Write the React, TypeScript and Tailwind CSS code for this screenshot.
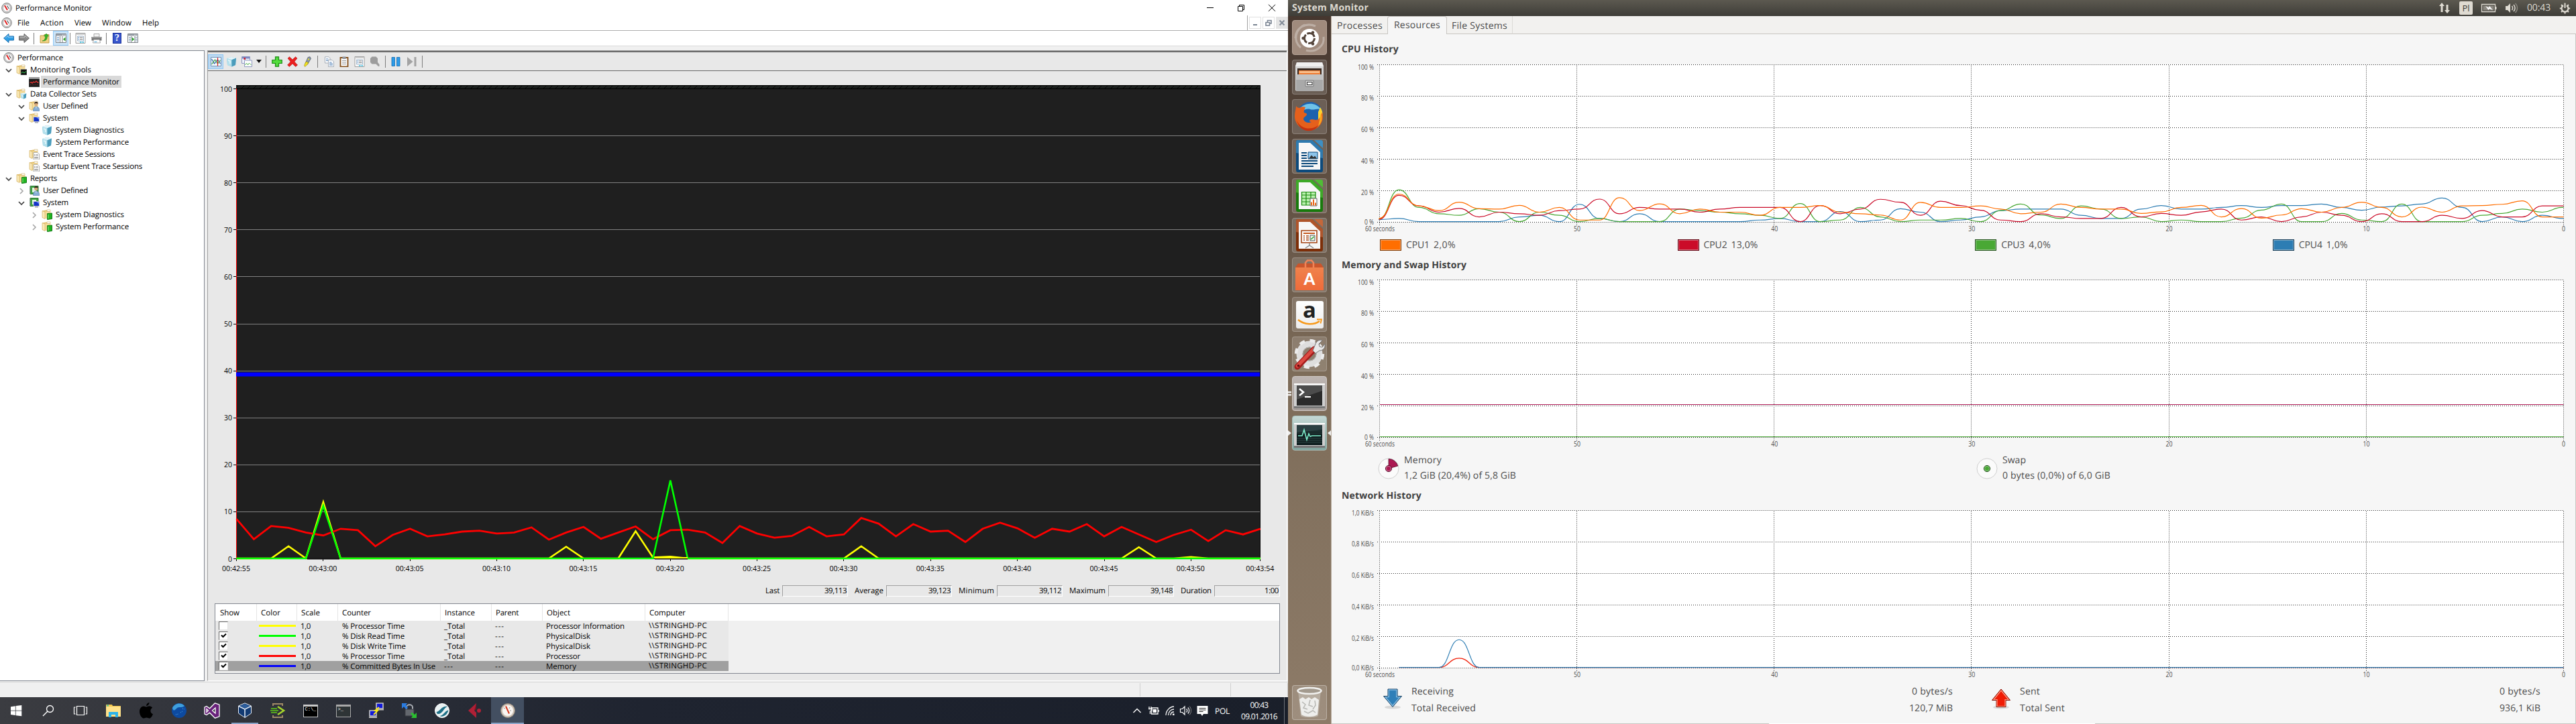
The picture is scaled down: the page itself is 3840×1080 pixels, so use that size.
import React, { useLayoutEffect, useRef, useState } from "react";

/* Label whose letter spacing is adjusted so that it spans w pixels. */
function T({ w, children, className = "" }: { w: number; children: string; className?: string }) {
  const ref = useRef<HTMLSpanElement>(null);
  const [ls, setLs] = useState(0);
  useLayoutEffect(() => {
    if (ref.current) {
      const natural = ref.current.getBoundingClientRect().width;
      setLs((w - natural) / children.length);
    }
  }, []);
  return (
    <span
      ref={ref}
      className={"inline-block w-fit shrink-0 whitespace-pre [text-rendering:geometricPrecision] " + className}
      style={{ letterSpacing: ls + "px" }}
    >
      {children}
    </span>
  );
}

type IconProps = { s?: number; children: React.ReactNode; vb?: number; className?: string };
function Ico({ s = 16, vb = 16, children, className = "" }: IconProps) {
  return (
    <svg width={s} height={s} viewBox={`0 0 ${vb} ${vb}`} className={"block shrink-0 " + className} fill="none">
      {children}
    </svg>
  );
}

/* ---------- small Windows icons ---------- */
const Gauge = () => (
  <Ico>
    <ellipse cx="8" cy="8" rx="7.3" ry="7.5" fill="#d8d8d8" stroke="#7c7c7c" />
    <ellipse cx="8" cy="8" rx="5.4" ry="5.6" fill="#fff" stroke="#9a9a9a" strokeWidth=".7" />
    <path d="M5 4.2 9 11" stroke="#e01818" strokeWidth="1.9" />
    <path d="M8.500 4.500 11.300 9" stroke="#404850" strokeWidth="1.100" />
  </Ico>
);
const FolderShape = () => (
  <>
    <path d="M1 2.5 6 1.5h5l1 1h1v11L5 14l-4-1.5z" fill="#e3bf6b" />
    <path d="M4 3.5h9.5V14H4z" fill="#f6dd9a" />
    <path d="M1 2.5 5 4v10.5L1 12.5z" fill="#fbeab8" stroke="#caa551" strokeWidth=".6" />
    <path d="M8 1h5v2.5H8z" fill="#fff" stroke="#c9a85c" strokeWidth=".6" />
  </>
);
const FolderMon = () => (
  <Ico>
    <FolderShape />
    <path d="M7 7.5h9V16H7z" fill="#111" stroke="#777" strokeWidth=".8" />
    <path d="M8 13l2-2 2 2 2-2h1.5" stroke="#2ecf50" strokeWidth="1" />
  </Ico>
);
const CubeShape = () => (
  <>
    <path d="M1 3 8 1l7 1.5L14 13l-5.500 2.500L2 13z" fill="#8cc9dd" />
    <path d="M1 3l7.500 2L8.500 15.500 2 13z" fill="#b4e0ec" />
    <path d="M8.500 5 15 2.500 14 13l-5.500 2.500z" fill="#4b9cbb" />
    <path d="M1 3 8 1l7 1.500L8.500 5z" fill="#e4f5fa" />
    <path d="M3 6l3 1v4" stroke="#e8f7fb" strokeWidth="1.500" />
  </>
);
const Cube = () => (
  <Ico>
    <CubeShape />
  </Ico>
);
const FolderCube = () => (
  <Ico>
    <FolderShape />
    <g transform="translate(6 6) scale(.62)">
      <CubeShape />
    </g>
  </Ico>
);
const Person = () => (
  <>
    <circle cx="10.800" cy="5.500" r="2.600" fill="#d9a97c" />
    <path d="M8 4.800c0-4 6-4 5.800 0-1.800-1-4-1-5.800 0z" fill="#3c2c20" />
    <path d="M6.500 15.500c0-5 2-6.500 4.500-6.500s4.800 1.500 4.800 6.500z" fill="#86aed6" stroke="#4c76a5" strokeWidth=".6" />
    <path d="M10.200 9.500h1.400l-.7 3z" fill="#fff" />
  </>
);
const FolderUser = () => (
  <Ico>
    <FolderShape />
    <Person />
  </Ico>
);
const Screen = () => (
  <>
    <path d="M7 6.500h8.500v7H7z" fill="#1432c8" stroke="#c8ccd4" strokeWidth=".9" />
    <path d="M11 7h4v3z" fill="#6f90ff" />
    <path d="M9 14.800h5" stroke="#a8acb4" strokeWidth="1.600" />
  </>
);
const FolderSys = () => (
  <Ico>
    <FolderShape />
    <Screen />
  </Ico>
);
const FolderTrace = () => (
  <Ico>
    <FolderShape />
    <path d="M7 5.500h6l2.500 2.500v8H7z" fill="#fff" stroke="#999" strokeWidth=".8" />
    <path d="M9 8v2.500M9 12v2.500M13 12v2.500" stroke="#777" />
    <circle cx="12.300" cy="9.300" r="1" stroke="#777" strokeWidth=".8" />
    <circle cx="11" cy="13.200" r="1" stroke="#777" strokeWidth=".8" />
  </Ico>
);
const FolderReport = () => (
  <Ico>
    <FolderShape />
    <path d="M8.500 6.500 15.500 6v8.500l-7 1z" fill="#1fb41f" stroke="#0c6f10" strokeWidth=".9" />
    <path d="M10 8v6" stroke="#8be88b" strokeWidth="1" />
  </Ico>
);
const Book = () => (
  <>
    <path d="M2 1.500h12v12H2z" fill="#3fa443" stroke="#1c6a24" strokeWidth=".9" />
    <path d="M5 4h6v7H5z" fill="#e4f6e4" />
    <path d="M1 2.500h2M1 5h2M1 7.500h2M1 10h2M1 12.500h2" stroke="#888" />
  </>
);
const BookUser = () => (
  <Ico>
    <Book />
    <Person />
  </Ico>
);
const BookSys = () => (
  <Ico>
    <Book />
    <Screen />
  </Ico>
);
const MonDark = () => (
  <Ico>
    <path d="M0 1.500h16v14H0z" fill="#1c1c1c" stroke="#555" />
    <path d="M0 1.500h16v2H0z" fill="#c4c4c4" />
    <path d="M1.500 9.500l2-1 1.500 1.500 2-2 2 1 2-2 2 2h1.500" stroke="#e33030" strokeWidth="1.300" />
    <path d="M2 12.500h11" stroke="#8c2b2b" strokeDasharray="1 1.500" />
  </Ico>
);
const Arrow = ({ c, d, flip }: { c: string; d: string; flip?: boolean }) => (
  <Ico className={flip ? "-scale-x-100" : ""}>
    <path d="M.6 8 8 1.500V5h7.400v6H8v3.500z" fill={c} stroke={d} strokeWidth="1" />
    <path d="M3 7.500 7 4v2.300h7.500" stroke="#fff" strokeOpacity=".5" />
  </Ico>
);
const FolderUp = () => (
  <Ico>
    <path d="M1 4h5l1-1.500h7V15H1z" fill="#f0d183" stroke="#b98f35" strokeWidth=".8" />
    <path d="M4 12c4-1 4.500-4 4.500-7H6.500L10 1l3.500 4h-2c0 5-2 7.500-7.500 7z" fill="#35b526" stroke="#1d7d14" strokeWidth=".5" />
  </Ico>
);
const Pane = ({ right }: { right?: boolean }) => (
  <Ico>
    <path d="M.5 1.500h15v13H.5z" fill="#fff" stroke="#7b8087" />
    <path d="M.5 2h15v2.500H.5z" fill="#9aa0a8" />
    <path d="M10 3.200h1M12 3.200h1M14 3.200h1" stroke="#fff" />
    {right ? (
      <>
        <path d="M6 5v9.500M11 5v9.500" stroke="#7b8087" />
        <path d="M6.800 6.500v6l3.500-3z" fill="#2aa12a" />
        <path d="M2 7h3M2 9.500h3M2 12h3M12 7h2.500M12 9.500h2.500M12 12h2.500" stroke="#6f8fae" />
      </>
    ) : (
      <>
        <path d="M6.500 5v9.500M10 5v9.500" stroke="#7b8087" />
        <path d="M14.500 6.500v6l-3.500-3z" fill="#2aa12a" />
        <path d="M2 7h3M2 9.500h3M2 12h3" stroke="#4d86bd" strokeWidth="1.200" />
      </>
    )}
  </Ico>
);
const Props = () => (
  <Ico>
    <path d="M1 .6h14v14.800H1z" fill="#fff" stroke="#9a9a9a" />
    <path d="M1.500 2h13" stroke="#c9c9c9" strokeWidth="1.800" />
    <path d="M3.500 5h9v7h-9z" stroke="#9db2c6" />
    <path d="M5 7h1M5 9.500h1" stroke="#2a70b8" strokeWidth="1.400" />
    <path d="M7 7h4.500M7 9.500h4.500" stroke="#777" />
    <path d="M7 14h2.500M10.500 14H13" stroke="#36c4e8" strokeWidth="1.300" />
  </Ico>
);
const Printer = () => (
  <Ico>
    <path d="M4 1.500h8V6H4z" fill="#f4f4f4" stroke="#888" strokeWidth=".7" />
    <path d="M.5 6h15v5.500H.5z" fill="#777" />
    <path d="M.5 6h15v2H.5z" fill="#999" />
    <path d="M3.500 10h9l1 5h-11z" fill="#fff" stroke="#888" strokeWidth=".7" />
    <path d="M4.500 13.500h4" stroke="#45a8e0" />
  </Ico>
);
const Help = () => (
  <div className="flex h-4 w-[13px] items-center justify-center border border-[#16309a] bg-[#3a57cd] font-['Liberation_Serif',serif] text-[14px] leading-none font-bold text-white">
    ?
  </div>
);
const LineChart = () => (
  <Ico>
    <path d="M.5 1.500h15v13H.5z" fill="#f6fbff" stroke="#6f93b8" />
    <path d="M1 6h14M1 10h14" stroke="#b9c8d6" strokeWidth=".6" />
    <path d="M1.500 4l4 7 5-6 4 6" stroke="#3a68b2" strokeWidth="1.200" />
    <path d="M1.500 12l5-7 4 6 4-5" stroke="#46a846" strokeWidth="1.200" />
    <path d="M10.500 2v12.500" stroke="#e02020" strokeWidth="1.200" />
  </Ico>
);
const Gallery = () => (
  <Ico>
    <path d="M.5.5h12v10H.5z" fill="#eef2fb" stroke="#8f98c0" />
    <path d="M1 1h11v2.500H1z" fill="#7a86c6" />
    <path d="M3.500 2h2.500v3H3.500z" fill="#c8232d" />
    <path d="M4.500 6h11v9.500h-11z" fill="#fff" stroke="#8f98c0" />
    <path d="M5.500 13l2-3 2 3 2-3 3 3" stroke="#59b559" />
  </Ico>
);
const Plus = () => (
  <Ico>
    <path d="M5.500.8h5v4.700h4.700v5h-4.700v4.700h-5v-4.700H.8v-5h4.700z" fill="#52dc3c" stroke="#1b8a14" strokeWidth="1.200" />
  </Ico>
);
const Cross = () => (
  <Ico>
    <path d="M1 3 3.500.8 8 5l4.500-4.200L15 3l-4.200 5 4.700 5-2.800 2.400L8 11l-4.700 4.400L.6 13l4.600-5z" fill="#ec2020" stroke="#ad0d0d" strokeWidth=".6" />
  </Ico>
);
const Marker = () => (
  <Ico>
    <path d="M9 1.500 12 .7l1.500 2.500L8.500 12 5 11z" fill="#8a98a8" stroke="#48525e" strokeWidth=".7" />
    <path d="M6 8l4 1.500L7.500 13 4.500 15.500l-1-2z" fill="#f2e21d" stroke="#8f8410" strokeWidth=".6" />
    <path d="M9 4l2 1" stroke="#f2e21d" strokeWidth="1.500" />
  </Ico>
);
const Copy = () => (
  <Ico>
    <path d="M1.500.8h5.500l2 2V10H1.500z" fill="#fff" stroke="#8f9aa8" strokeWidth=".8" />
    <path d="M6.500 5.500h5.500l2.500 2.500v7.500h-8z" fill="#fff" stroke="#8f9aa8" strokeWidth=".8" />
    <path d="M3 4h3.500M3 6.500h3M8 9h3.500M8 11h5M8 13h5" stroke="#4f7fb5" />
  </Ico>
);
const Clip = () => (
  <Ico>
    <path d="M2.500 2h11v13.500h-11z" fill="#fff" stroke="#84501c" strokeWidth="1.800" />
    <path d="M5.500.5h5V4h-5z" fill="#8d939b" />
    <path d="M5 6.500h6M5 9h6M5 11.500h6" stroke="#999" />
  </Ico>
);
const Mag = () => (
  <Ico>
    <path d="M3.500.5h6L12 3v6l2.500 3v3H13l-3.500-3.500h-6L1 9V3z" fill="#9c9c9c" />
  </Ico>
);
const Pause = () => (
  <Ico>
    <path d="M2 1.500h4.500v13H2zM9.500 1.500H14v13H9.500z" fill="#2c9be8" stroke="#1268ad" strokeWidth=".8" />
  </Ico>
);
const Next = () => (
  <Ico>
    <path d="M1 1l8.500 7L1 15zM11.500 1h3v14h-3z" fill="#a3a3a3" />
  </Ico>
);

const Sep = ({ g, h = 18 }: { g: string; h?: number }) => (
  <div className={(h === 18 ? "h-[18px] " : "h-[17px] ") + "w-px shrink-0 bg-[#7d7d7d] " + g} />
);

/* ---------- tree ---------- */
type Node = { lv: number; ch?: "open" | "closed"; icon: React.ReactNode; t: string; w: number; sel?: boolean };
const tree: Node[] = [
  { lv: 1, ch: "open", icon: <FolderMon />, t: "Monitoring Tools", w: 91 },
  { lv: 2, icon: <MonDark />, t: "Performance Monitor", w: 114, sel: true },
  { lv: 1, ch: "open", icon: <FolderCube />, t: "Data Collector Sets", w: 99 },
  { lv: 2, ch: "open", icon: <FolderUser />, t: "User Defined", w: 67 },
  { lv: 2, ch: "open", icon: <FolderSys />, t: "System", w: 38 },
  { lv: 3, icon: <Cube />, t: "System Diagnostics", w: 102 },
  { lv: 3, icon: <Cube />, t: "System Performance", w: 109 },
  { lv: 2, icon: <FolderTrace />, t: "Event Trace Sessions", w: 107 },
  { lv: 2, icon: <FolderTrace />, t: "Startup Event Trace Sessions", w: 148 },
  { lv: 1, ch: "open", icon: <FolderReport />, t: "Reports", w: 40 },
  { lv: 2, ch: "closed", icon: <BookUser />, t: "User Defined", w: 67 },
  { lv: 2, ch: "open", icon: <BookSys />, t: "System", w: 38 },
  { lv: 3, ch: "closed", icon: <FolderReport />, t: "System Diagnostics", w: 102 },
  { lv: 3, ch: "closed", icon: <FolderReport />, t: "System Performance", w: 109 },
];
const indent = ["", "pl-[7px]", "pl-[26px]", "pl-[45px]"];

function Tree() {
  return (
    <div className="mt-[6px] h-[941px] w-[305px] shrink-0 border border-l-0 border-[#828790] bg-white pt-px">
      <div className="flex h-[18px] items-center pl-[5px]">
        <Gauge />
        <T w={68} className="ml-[5px]">Performance</T>
      </div>
      {tree.map((n, i) => (
        <div key={i} className={"flex h-[18px] items-center " + indent[n.lv]}>
          <svg width="12" height="12" viewBox="0 0 12 12" fill="none" className="mt-px shrink-0">
            {n.ch === "open" && <path d="M2 4l4 4 4-4" stroke="#404040" strokeWidth="1.700" />}
            {n.ch === "closed" && <path d="M4 2l4 4-4 4" stroke="#a6a6a6" strokeWidth="1.600" />}
          </svg>
          <div className="ml-[5px] shrink-0">{n.icon}</div>
          <div className={"ml-[2px] flex h-[18px] items-center pr-[3px] pl-[3px] " + (n.sel ? "bg-[#d9d9d9]" : "")}>
            <T w={n.w}>{n.t}</T>
          </div>
        </div>
      ))}
    </div>
  );
}

/* ---------- performance chart ---------- */
const cpu = [
  8.4, 4.1, 6.9, 6.5, 5.5, 4.9, 6.3, 6, 2.6, 5, 6.3, 4.7, 5.1, 5.7, 5.9, 5.3, 5.5, 6.6, 4, 5.5, 6.7, 4.2, 5.5, 6.8, 4.1, 6,
  6.1, 5.5, 3.3, 6.9, 5.3, 4.4, 4.8, 6.7, 4.7, 5.1, 8.6, 7.4, 4.7, 7.3, 5.7, 5.9, 3.5, 6.3, 7.6, 6.4, 4.4, 6.3, 5.7, 7.3,
  4.7, 6.7, 5.1, 3.5, 5, 6.1, 3.7, 6, 5.1, 6.3,
];
const sparse = (m: Record<number, number>) => Array.from({ length: 60 }, (_, i) => m[i] ?? 0);
const write = sparse({ 3: 2.6, 5: 12, 19: 2.5, 23: 5.8, 24: 0.2, 25: 0.4, 36: 2.6, 52: 2.4, 55: 0.3 });
const read = sparse({ 5: 11.2, 25: 16.6 });
const pts = (a: number[]) => a.map((v, i) => `${(352.5 + i * 25.87).toFixed(1)},${(833 - v * 7.01).toFixed(1)}`).join(" ");
const ticks: [number, string][] = [
  [0, "00:42:55"], [5, "00:43:00"], [10, "00:43:05"], [15, "00:43:10"], [20, "00:43:15"], [25, "00:43:20"],
  [30, "00:43:25"], [35, "00:43:30"], [40, "00:43:35"], [45, "00:43:40"], [50, "00:43:45"], [55, "00:43:50"], [59, "00:43:54"],
];

function PerfChart() {
  return (
    <svg width="1608" height="755" viewBox="310 106 1608 755" className="block shrink-0 font-['Open_Sans',sans-serif] text-[11.5px]">
      <defs>
        <pattern id="hatch" width="9" height="6" patternUnits="userSpaceOnUse">
          <path d="M0 6 6 0" stroke="#050505" />
        </pattern>
      </defs>
      <path d="M352 127h1527v707H352z" fill="#1f1f1f" />
      <path d="M352 127h1527v6H352z" fill="#1c201e" />
      <path d="M352 127h1527v6H352z" fill="url(#hatch)" />
      <path d="M352 127.500h1526.500V834M352 132.500h1526" stroke="#000" fill="none" />
      {[1, 2, 3, 4, 5, 6, 7, 8, 9].map((k) => (
        <path key={k} d={`M353 ${Math.round(833 - k * 70.1) + 0.5}h1525`} stroke="#808080" />
      ))}
      {[0, 1, 2, 3, 4, 5, 6, 7, 8, 9, 10].map((k) => (
        <g key={k}>
          <path d={`M348 ${Math.round(833 - k * 70.1) + 0.5}h4`} stroke="#000" />
          <text x="346" y={833.500 - k * 70.1 + 4} textAnchor="end" textLength={k === 10 ? 18 : k ? 12 : 6} lengthAdjust="spacingAndGlyphs" fill="#000">
            {k * 10}
          </text>
        </g>
      ))}
      <path d="M352.500 132v701" stroke="#f00" />
      <path d="M352 833.500h1527" stroke="#000" />
      {ticks.map(([i, t]) => (
        <g key={t}>
          <path d={`M${Math.round(352 + i * 25.87) + 0.5} 834v3`} stroke="#000" />
          <text x={352 + i * 25.87} y="852" textAnchor="middle" textLength="42" lengthAdjust="spacingAndGlyphs" fill="#000">
            {t}
          </text>
        </g>
      ))}
      <g fill="none" strokeLinejoin="miter">
        <polyline points={pts(write)} stroke="#ff0" strokeWidth="2.600" />
        <polyline points={pts(cpu)} stroke="#f00" strokeWidth="2.800" />
        <polyline points={pts(read)} stroke="#0f0" strokeWidth="2.600" />
        <path d="M458 833.500h48M976 833.500h49" stroke="#111" strokeWidth="2" />
        <path d="M976 832h49" stroke="#ff0" strokeWidth="2" />
        <path d="M352 558.500h1526" stroke="#00f" strokeWidth="6" />
      </g>
    </svg>
  );
}

const stats: [string, number, string, number][] = [
  ["Last", 21, "39,113", 33],
  ["Average", 43, "39,123", 33],
  ["Minimum", 53, "39,112", 33],
  ["Maximum", 54, "39,148", 33],
  ["Duration", 46, "1:00", 21],
];

const cols: [string, number, string][] = [
  ["Show", 29, "w-[62px] pl-[7px]"],
  ["Color", 29, "w-[60px] pl-[6px]"],
  ["Scale", 28, "w-[61px] pl-[6px]"],
  ["Counter", 43, "w-[153px] pl-[6px]"],
  ["Instance", 45, "w-[76px] pl-[6px]"],
  ["Parent", 34, "w-[76px] pl-[6px]"],
  ["Object", 35, "w-[153px] pl-[6px]"],
  ["Computer", 54, "w-[124px] pl-[6px]"],
];
const rows: [boolean, string, string, number, string, number, string, number][] = [
  [false, "bg-[#ffff00]", "% Processor Time", 93, "_Total", 31, "Processor Information", 117],
  [true, "bg-[#00ff00]", "% Disk Read Time", 93, "_Total", 31, "PhysicalDisk", 66],
  [true, "bg-[#ffff00]", "% Disk Write Time", 95, "_Total", 31, "PhysicalDisk", 66],
  [true, "bg-[#ff0000]", "% Processor Time", 93, "_Total", 31, "Processor", 51],
  [true, "bg-[#0000ff]", "% Committed Bytes In Use", 139, "---", 14, "Memory", 45],
];

function CounterTable() {
  return (
    <div className="ml-[10px] h-[105px] w-[1588px] border border-[#828790] bg-[#f0f0f0]">
      <div className="flex h-[25px] bg-white">
        {cols.map(([t, w, c]) => (
          <div key={t} className={"flex h-full items-center border-r border-[#e5e5e5] pt-[2px] " + c}>
            <T w={w}>{t}</T>
          </div>
        ))}
      </div>
      {rows.map((r, i) => (
        <div key={i} className={"flex h-[15px] w-[765px] items-center " + (i === 4 ? "bg-[#a0a0a0]" : "bg-[#e8e8e8]")}>
          <div className="w-[64px] pl-[5px]">
            <div className="flex h-[13px] w-[14px] items-center justify-center border border-t-[#696969] border-r-[#e3e3e3] border-b-[#e3e3e3] border-l-[#696969] bg-white">
              {r[0] && (
                <svg width="9" height="9" viewBox="0 0 9 9" fill="none">
                  <path d="M1 3.500 3.500 6 8 1.500" stroke="#000" strokeWidth="2" />
                </svg>
              )}
            </div>
          </div>
          <div className="w-[63px] pl-px">
            <div className={"h-[3px] w-[55px] " + r[1]} />
          </div>
          <div className="w-[62px]"><T w={15}>1,0</T></div>
          <div className="w-[152px]"><T w={r[3]}>{r[2]}</T></div>
          <div className="w-[76px]"><T w={r[5]}>{r[4]}</T></div>
          <div className="w-[76px]"><T w={14}>---</T></div>
          <div className="w-[153px]"><T w={r[7]}>{r[6]}</T></div>
          <T w={87}>{"\\\\STRINGHD-PC"}</T>
        </div>
      ))}
    </div>
  );
}

/* ---------- Windows taskbar ---------- */
const tbIcons: React.ReactNode[] = [
  <Ico s={22} vb={22}>
    <path d="M0 3l9.300-1.300V10.500H0zM10.300 1.500 22 0v10.500H10.300zM0 11.500h9.300v8.800L0 19zM10.300 11.500H22V22l-11.700-1.500z" fill="#fff" transform="translate(3 3) scale(.74)" />
  </Ico>,
  <Ico s={22} vb={22}>
    <circle cx="13.500" cy="8.500" r="5" stroke="#fff" strokeWidth="1.300" />
    <path d="M10 12l-7 7" stroke="#fff" strokeWidth="1.400" />
  </Ico>,
  <Ico s={22} vb={22}>
    <path d="M5.500 4.500h11v13h-11zM3.500 6H1.500v10h2M18.500 6h2v10h-2" stroke="#fff" strokeWidth="1.200" />
  </Ico>,
  <Ico s={24} vb={24}>
    <path d="M1 3h9l1 2h12v16H1z" fill="#f2c74e" />
    <path d="M1 6h22v15H1z" fill="#ffe28a" />
    <path d="M2 3.500h3v2H2z" fill="#3fc0a0" />
    <path d="M5 22v-8h14v8h-4v-4H9v4z" fill="#2db3ea" />
  </Ico>,
  <Ico s={24} vb={24}>
    <path d="M16.500 0c.2 2-2 5-4.500 5 0-2.600 2-4.600 4.500-5zM12 6.500c1.500 0 2.500-1.200 4.500-1.200 2 0 3.700 1 4.600 2.500-4 2.400-3.400 8 .9 9.400-1 2.600-3 6.300-5.400 6.300-1.500 0-2.200-1-4.200-1s-2.700 1-4.200 1C5 23.500 2 18 2 13.500c0-5 3-8 6-8 1.800 0 3 1 4 1z" fill="#000" />
  </Ico>,
  <Ico s={24} vb={24}>
    <circle cx="12" cy="12" r="11" fill="#0d4aa0" />
    <path d="M2 8C5 1 15-1 20 5 15 9 12 5 8 9s-5 3-6-1z" fill="#3f9fdc" />
    <path d="M14 15l3-2M7 18l4-1M17 9l3 1" stroke="#5ab0e8" strokeDasharray="1 1.500" />
  </Ico>,
  <Ico s={24} vb={24}>
    <path d="M16.500.8 23 3.200v17.600l-6.500 2.400-8-8L4 18.500 1 17V7l3-1.500 4.500 3.300zM17 8l-4.500 4 4.500 4zM4 9.500v5L6.500 12z" fill="#68217a" fillRule="evenodd" stroke="#fff" strokeWidth="1.300" />
  </Ico>,
  <Ico s={24} vb={24}>
    <path d="M12 .8 21.500 5v11L12 22.500 2.500 16V5z" fill="#123a72" stroke="#e6eef8" strokeWidth="1" />
    <path d="M3 5.500 12 10l9-4.500M12 10v12" stroke="#e6eef8" strokeWidth="1.500" />
    <path d="M5 5.200 12 2l7 3.200-7 3.300z" fill="#2c5d9c" />
  </Ico>,
  <Ico s={24} vb={24}>
    <path d="M5 5V2h14v3M5 19v3h14v-3" stroke="#a08a66" strokeWidth="2" />
    <path d="M2 9h9M1 12h12M2 15h9" stroke="#53a51e" strokeWidth="2.200" />
    <path d="M12 6l9 6-9 6" stroke="#a6d52c" strokeWidth="2.600" />
  </Ico>,
  <div className="h-[19px] w-[22px] border border-t-[3px] border-[#c9c9c9] bg-black pl-[2px] font-['Liberation_Mono',monospace] text-[7px] leading-[8px] text-white">C:\_</div>,
  <div className="h-[19px] w-[22px] border border-t-[3px] border-[#a9a9a9] bg-[#2e3436] pl-[2px] font-['Liberation_Mono',monospace] text-[7px] leading-[9px] text-white">&gt;_</div>,
  <Ico s={24} vb={24}>
    <path d="M12 1h10v8H12zM2 12h10v8H2z" fill="#1018d8" stroke="#c8c8c8" strokeWidth="1.600" />
    <path d="M13 10.500h10M1 22h12" stroke="#b8b8b8" strokeWidth="2" />
    <path d="M16 7l-6 5h4l-6 6" stroke="#ffee10" strokeWidth="1.800" />
  </Ico>,
  <Ico s={24} vb={24}>
    <path d="M8 12V7c0-5 9-5 9 0v5" stroke="#a9adb3" strokeWidth="2" />
    <path d="M6 10h13v10H6z" fill="#63676e" stroke="#3a3d42" />
    <path d="M1 1h8L7 4l3 4-3 2-3-4-3 3z" fill="#2a7be0" />
    <path d="M23 23h-8l2-3-3-4 3-1 3 3 3-3z" fill="#2bbf30" />
  </Ico>,
  <Ico s={24} vb={24}>
    <circle cx="12" cy="12" r="10.500" fill="#e9f1f2" stroke="#fff" />
    <path d="M3.500 14C8 14 12 4 20 6 14 8 13 18 5 17zM8 20c6 0 8-8 13.500-8.500-2 7-8 11-13.500 8.500z" fill="#1d6f86" />
  </Ico>,
  <Ico s={24} vb={24}>
    <path d="M14 1v8l-3 3 3 3v8L2 12z" fill="#b02036" />
    <path d="M14 1v8l-3 3z" fill="#7d1224" />
    <circle cx="18" cy="12" r="3" fill="#b02036" />
  </Ico>,
  <Ico s={24} vb={24}>
    <circle cx="12" cy="12" r="10.500" fill="#cfc4b8" stroke="#8f8375" />
    <circle cx="12" cy="12" r="8" fill="#f8f6f3" />
    <path d="M9 5.500l5 11" stroke="#d43a20" strokeWidth="2" />
    <path d="M6 8l2 1M15 7l-1 2M17 12h-2" stroke="#999" />
  </Ico>,
];

function Taskbar() {
  return (
    <div className="flex h-[40px] w-full bg-gradient-to-r from-[#3b3c41] via-[#1f2430] to-[#1a1f2a] text-white">
      {tbIcons.map((ic, i) => (
        <div
          key={i}
          className={
            "flex h-[40px] shrink-0 items-center justify-center " +
            (i < 3 ? "w-[48px] " : "w-[49px] ") +
            (i === 15 ? "border-b-2 border-[#8aa4c8] bg-[#434f61] pt-[2px]" : "")
          }
        >
          {i === 7 ? (
            <div className="flex h-full w-[40px] items-center justify-center border-b-2 border-[#8aa4c8] pt-[2px]">{ic}</div>
          ) : (
            ic
          )}
        </div>
      ))}
      <div className="ml-auto flex items-center">
        <Ico s={14} vb={14}><path d="M1.500 10 7 4.500 12.500 10" stroke="#fff" strokeWidth="1.400" /></Ico>
        <Ico s={18} vb={18} className="ml-[9px]">
          <path d="M5.500 5h9.500v9H5.500z" stroke="#fff" strokeWidth="1.300" />
          <path d="M7.500 7h5.500v5H7.500z" fill="#fff" />
          <path d="M16.300 8v3M2 3v3M5 3v3M1 6.500h5v2L3.500 10v4" stroke="#fff" strokeWidth="1.300" />
        </Ico>
        <Ico s={16} vb={16} className="ml-[7px]">
          <path d="M2 15C2 8 8 2 14 2M5.500 15c0-5 4-9 8.500-9M9 15c0-3 2-5 5-5" stroke="#fff" strokeWidth="1.300" />
          <path d="M12 12.500h2.500V15H12z" fill="#fff" />
        </Ico>
        <Ico s={18} vb={18} className="ml-[6px]">
          <path d="M1.500 6.500h3L8 3v12l-3.500-3.500h-3z" stroke="#fff" strokeWidth="1.200" />
          <path d="M10.500 6.500c1.500 1.500 1.500 3.500 0 5M12.800 4.500c2.500 2.500 2.500 6.500 0 9" stroke="#fff" strokeWidth="1.200" />
          <path d="M15 2.500c3.500 3.500 3.500 9.500 0 13" stroke="#888" />
        </Ico>
        <Ico s={17} vb={17} className="ml-[8px]">
          <path d="M.5 1h16v12H10l-2 3-2-3H.5z" fill="#fff" />
          <path d="M3.500 4.500h10M3.500 7h10M3.500 9.500h6" stroke="#222" strokeWidth="1.200" />
        </Ico>
        <T w={22} className="ml-[10px] text-[12px]">POL</T>
        <div className="ml-[16px] flex w-[56px] flex-col items-center text-[12px] leading-[17px]">
          <T w={27}>00:43</T>
          <T w={54}>09.01.2016</T>
        </div>
        <div className="ml-[9px] h-[40px] w-px bg-[#6d7078]" />
        <div className="w-[5px]" />
      </div>
    </div>
  );
}

function WindowsSide() {
  return (
    <div className="flex h-[1080px] w-[1920px] shrink-0 flex-col bg-white font-['Open_Sans',sans-serif] text-[11.5px] leading-[15px] text-black">
      <div className="flex h-[23px] items-center pt-px pl-[2px]">
        <Gauge />
        <T w={114} className="ml-[5px]">Performance Monitor</T>
        <div className="ml-auto flex items-center gap-[34px] pr-[18px]">
          <Ico s={12} vb={12}><path d="M1 5.500h10" stroke="#000" /></Ico>
          <Ico s={12} vb={12}><path d="M1.500 3.500h7v7h-7zM3.500 3.500v-2h7v7h-2" stroke="#000" /></Ico>
          <Ico s={12} vb={12}><path d="M1 .8 11 10.800M11 .8 1 10.800" stroke="#000" /></Ico>
        </div>
      </div>
      <div className="flex h-[23px] items-center border-b border-[#adadad] pl-[2px]">
        <Gauge />
        <T w={18} className="ml-[8px]">File</T>
        <T w={35} className="ml-[16px]">Action</T>
        <T w={25} className="ml-[16px]">View</T>
        <T w={44} className="ml-[16px]">Window</T>
        <T w={25} className="ml-[16px]">Help</T>
        <div className="ml-auto flex h-full items-center gap-[2px] border-l border-[#a0a0a0] pl-[2px]">
          <div className="flex h-[18px] w-[18px] items-center justify-center border border-[#e0e0e0]">
            <Ico s={12} vb={12}><path d="M3 9h6" stroke="#7a8492" strokeWidth="2" /></Ico>
          </div>
          <div className="flex h-[18px] w-[18px] items-center justify-center border border-[#e0e0e0]">
            <Ico s={12} vb={12}><path d="M2 5.500h5.500V10H2zM4.500 5V2.500H10V7H8" stroke="#7a8492" strokeWidth="1.600" /></Ico>
          </div>
          <div className="flex h-[18px] w-[18px] items-center justify-center bg-[#e4e4e4]">
            <Ico s={12} vb={12}><path d="M2.500 2.500l7 7M9.500 2.500l-7 7" stroke="#848c98" strokeWidth="2" /></Ico>
          </div>
        </div>
      </div>
      <div className="flex h-[23px] items-center border-b border-[#dadada] pl-[5px]">
        <Arrow c="#2f9fe6" d="#1a6dad" />
        <div className="ml-[7px]"><Arrow c="#8a8a8a" d="#5e5e5e" flip /></div>
        <Sep g="ml-[6px]" h={17} />
        <div className="ml-[8px]"><FolderUp /></div>
        <div className="ml-[4px] flex h-[22px] w-[23px] items-center justify-center border border-[#90c8f6] bg-[#cce4f7]"><Pane /></div>
        <Sep g="ml-[2px]" h={17} />
        <div className="ml-[7px]"><Props /></div>
        <div className="ml-[8px]"><Printer /></div>
        <Sep g="ml-[6px]" h={17} />
        <div className="ml-[9px]"><Help /></div>
        <div className="ml-[9px]"><Pane right /></div>
      </div>
      <div className="flex h-[948px] gap-[4px] bg-[#f0f0f0]">
        <Tree />
        <div className="mt-[6px] flex h-[941px] w-[1610px] flex-col border border-t border-[#a0a0a0] border-r-[#fff] border-b-[#fff] bg-[#e8e8e8]">
          <div className="flex h-[30px] items-center border-t-2 border-b border-t-[#696969] border-b-[#696969]">
            <div className="flex h-[22px] w-[23px] items-center justify-center border border-[#90c8f6] bg-[#bcd9f1]"><LineChart /></div>
            <div className="ml-[4px]"><Cube /></div>
            <div className="ml-[7px]"><Gallery /></div>
            <svg width="8" height="5" viewBox="0 0 8 5" className="ml-[6px]"><path d="M0 0h8L4 5z" fill="#111" /></svg>
            <Sep g="ml-[6px]" />
            <div className="ml-[8px]"><Plus /></div>
            <div className="ml-[7px]"><Cross /></div>
            <div className="ml-[6px]"><Marker /></div>
            <Sep g="ml-[7px]" />
            <div className="ml-[9px]"><Copy /></div>
            <div className="ml-[6px]"><Clip /></div>
            <div className="ml-[7px]"><Props /></div>
            <div className="ml-[7px]"><Mag /></div>
            <Sep g="ml-[7px]" />
            <div className="ml-[7px]"><Pause /></div>
            <div className="ml-[8px]"><Next /></div>
            <Sep g="ml-[7px]" />
          </div>
          <PerfChart />
          <div className="flex h-[39px] shrink-0 items-start justify-end gap-[10px] pt-[12px] pr-[10px]">
            {stats.map(([l, lw, v, vw]) => (
              <div key={l} className="flex items-center gap-[4px]">
                <T w={lw}>{l}</T>
                <div className="flex h-[17px] w-[98px] items-center justify-end border border-t-[#a0a0a0] border-r-white border-b-white border-l-[#a0a0a0] pr-px">
                  <T w={vw}>{v}</T>
                </div>
              </div>
            ))}
          </div>
          <CounterTable />
        </div>
      </div>
      <div className="flex h-[23px] justify-end border-t border-[#d7d7d7] bg-[#f0f0f0] py-px">
        <div className="w-[135px] border-l border-[#d0d0d0]" />
        <div className="w-[86px] border-x border-[#d0d0d0]" />
      </div>
      <Taskbar />
    </div>
  );
}

/* ---------- GNOME system monitor ---------- */
const c1 = [2, 17.5, 10, 7, 12.3, 8.2, 8, 10.3, 6, 9, 1, 1, 15.2, 7, 11.3, 5, 8, 6, 6, 4, 9, 9, 10.2, 6, 5, 4.2, 1, 12.2, 9, 9, 10, 8, 5, 6, 11.2, 9, 8, 8, 5.2, 6.2, 9, 10.3, 3, 8.3, 2.2, 4.2, 8.2, 6, 9, 12.3, 9, 3, 9.2, 6, 10, 10.2, 11, 13.2, 3, 3];
const c2 = [1.4, 16.7, 10, 6, 8.4, 3, 6, 5, 4, 7, 8, 14.3, 5, 9, 8, 8, 6, 8, 9, 9, 9, 0, 10.2, 5, 8, 14.2, 12.3, 4, 13, 10.2, 7.2, 1, 0, 5, 3, 2, 2, 9, 3, 5.2, 4, 6.2, 8, 1, 3, 0, 3, 6, 4, 0, 5, 0, 0, 4, 2, 7, 3, 3, 10, 10];
const c3 = [1.7, 20.2, 9, 5, 4, 8.2, 6, 0, 6, 4, 0, 2, 0, 0, 0, 8, 7, 6, 5, 4, 2, 11.5, 0, 1, 9, 3, 0, 1, 1, 2, 0, 7, 11.2, 4.2, 2, 10, 8, 2, 3, 0, 1, 0, 0, 2.2, 7.3, 11.2, 0, 0, 5.2, 1, 0, 11.2, 0, 0, 0, 4, 5.2, 8, 6, 9];
const c4 = [1.3, 2, 0, 0, 0, 0, 0, 3, 4, 0, 11, 2, 0, 5, 0, 0, 0, 0, 0, 1, 2, 0, 0, 6.4, 0, 1, 8.2, 6, 0, 1, 3, 7, 8, 8, 8, 4, 2, 2, 8, 10.2, 8, 8, 9, 10.2, 9, 10.2, 10.2, 11.2, 9, 7.2, 9.3, 10, 11.2, 15, 9, 0, 3, 0, 4, 2];
const net = (peak: number) => sparse({ 4: peak });

function smooth(a: number[], from = 0) {
  const X = (k: number) => 70.5 + 29.9 * k;
  const Y = (k: number) => 240.6 - 2.35 * a[k];
  let d = `M${X(from)} ${Y(from)}`;
  for (let k = from + 1; k < a.length; k++) {
    const m = (X(k - 1) + X(k)) / 2;
    d += `C${m} ${Y(k - 1)} ${m} ${Y(k)} ${X(k)} ${Y(k)}`;
  }
  return d + "H1836.5";
}

function Graph({ labels, lw, children }: { labels: string[]; lw: number[]; children: React.ReactNode }) {
  const ly = [10.5, 56.5, 103.5, 150.5, 197.5, 241.5];
  return (
    <svg width="1855" height="260" viewBox="0 0 1855 260" className="block shrink-0 font-['Open_Sans',sans-serif] text-[10px]">
      <path d="M71.500 6.500h1765v235h-1765z" fill="#fff" />
      {[0, 1, 2, 3, 4, 5].map((k) => (
        <path key={k} d={`M68 ${6.5 + 47 * k}h1769`} stroke="#2a2a2a" strokeDasharray="1 2" />
      ))}
      {[0, 1, 2, 3, 4, 5, 6].map((k) => (
        <path key={k} d={`M${Math.floor(71.5 + 294.15 * k) + 0.5} 8v238`} stroke="#2a2a2a" strokeDasharray="1 2" />
      ))}
      <g fill="#4c4c4c">
        {labels.map((l, i) => (
          <text key={l} x="63" y={ly[i] + 3.5} textAnchor="end" textLength={lw[i]} lengthAdjust="spacingAndGlyphs">
            {l}
          </text>
        ))}
        <text x="72" y="255" textAnchor="middle" textLength="44" lengthAdjust="spacingAndGlyphs">60 seconds</text>
        {["50", "40", "30", "20", "10"].map((l, i) => (
          <text key={l} x={366 + 294.15 * i} y="255" textAnchor="middle" textLength="10" lengthAdjust="spacingAndGlyphs">{l}</text>
        ))}
        <text x="1836.500" y="255" textAnchor="middle" textLength="5" lengthAdjust="spacingAndGlyphs">0</text>
      </g>
      <g fill="none" strokeWidth="1.200">{children}</g>
    </svg>
  );
}
const pct = ["100 %", "80 %", "60 %", "40 %", "20 %", "0 %"];
const pctW = [24, 19, 19, 19, 19, 14];
const kib = ["1,0 KiB/s", "0,8 KiB/s", "0,6 KiB/s", "0,4 KiB/s", "0,2 KiB/s", "0,0 KiB/s"];

const legend: [string, string, number, string][] = [
  ["CPU1", "2,0%", 33, "border-[#7a3500] bg-[#ff6e00]"],
  ["CPU2", "13,0%", 40, "border-[#5c0512] bg-[#cb0c29]"],
  ["CPU3", "4,0%", 33, "border-[#1d4a16] bg-[#49a835]"],
  ["CPU4", "1,0%", 32, "border-[#143852] bg-[#2d7db3]"],
];

const Dial = ({ fill, slice }: { fill: string; slice?: boolean }) => (
  <Ico s={32} vb={32}>
    <circle cx="16" cy="16" r="15" fill="#fbfbfb" stroke="#cfcfcf" />
    {slice && <path d="M16 16V1.500A14.500 14.500 0 0 1 29.800 12z" fill={fill} stroke="#5a0c2c" strokeWidth=".8" />}
    <circle cx="16" cy="16" r="4.600" fill={fill} stroke={slice ? "#5a0c2c" : "#1d4a16"} strokeWidth="1" />
    <circle cx="16" cy="16" r="3.600" stroke="#fff" strokeOpacity=".4" />
  </Ico>
);

const BigArrow = ({ up }: { up?: boolean }) => (
  <svg width="28" height="32" viewBox="0 0 28 32" fill="none" className="shrink-0">
    <ellipse cx="14" cy="28" rx="12" ry="2.500" fill="#000" fillOpacity=".12" />
    {up ? (
      <>
        <path d="M14 1 27.500 17.500H21v10H7v-10H.5z" fill="#f01c05" stroke="#7e0d00" />
        <path d="M14 3 25 16.500h-5v10H8v-10H3z" stroke="#ff9a85" strokeWidth="1.200" />
      </>
    ) : (
      <>
        <path d="M7 1h14v10.500h6.500L14 27.500.5 11.500H7z" fill="#2f7fb8" stroke="#123c5e" />
        <path d="M8.300 2.200h11.400v10.500H25L14 25.700 3 12.700h5.300z" stroke="#8cc0e4" strokeWidth="1.200" />
      </>
    )}
  </svg>
);

/* ---------- Unity launcher ---------- */
const LibreDoc = ({ c, d, children }: { c: string; d: string; children: React.ReactNode }) => (
  <Ico s={50} vb={50}>
    <path d="M7 1h22l16 15v30c0 2-1 3-3 3H8c-2 0-3-1-3-3V4c0-2 1-3 2-3z" fill={d} />
    <path d="M7 1h22l16 15v12L5 20V4c0-2 1-3 2-3z" fill={c} fillOpacity=".7" />
    <path d="M32 1h10c2 0 3 1 3 3v9z" fill={c} />
    <path d="M9 5h17l15 14v26H9z" fill="#f7f7f7" />
    {children}
  </Ico>
);

const launcher: React.ReactNode[] = [
  <Ico s={50} vb={50}>
    <path d="M4 26C4 10 20 2 34 8M46 24c2 14-12 24-26 20M12 40C0 30 4 12 18 6" stroke="#fff" strokeOpacity=".3" strokeWidth="3" />
    <circle cx="25" cy="26" r="14" fill="#fff" />
    <circle cx="25" cy="26" r="7.500" stroke="#55463c" strokeWidth="3" strokeDasharray="13.500 2.200" />
    <circle cx="15.500" cy="26" r="2.200" fill="#55463c" />
    <circle cx="30" cy="17.500" r="2.200" fill="#55463c" />
    <circle cx="30" cy="34.500" r="2.200" fill="#55463c" />
  </Ico>,
  <Ico s={50} vb={50}>
    <path d="M6 3h38l2 6v36H4V9z" fill="#d4d4d4" />
    <path d="M6 3h38l2 6H4z" fill="#f0f0f0" />
    <path d="M7 12h36v12H7z" fill="#3a2a22" />
    <path d="M9 15h32v7H9z" fill="#ef7e36" />
    <path d="M10 17.500h30" stroke="#fff3d0" strokeWidth="1.500" />
    <path d="M5 21h40v25H5z" fill="#a9a9a9" />
    <path d="M5 21h40v8H5z" fill="#c2c2c2" />
    <rect x="19" y="30" width="12" height="9" rx="1" fill="#dcdcdc" stroke="#777" />
    <rect x="21.500" y="32.500" width="7.500" height="4" fill="#fff" stroke="#333" />
  </Ico>,
  <Ico s={50} vb={50}>
    <circle cx="26" cy="22" r="19" fill="#1d62ae" />
    <path d="M10 14C16 4 34 2 42 14c-6-2-10 2-16 0S14 18 10 14z" fill="#6fc3ea" />
    <path d="M41 11c4 6 5 12 1 20l-4 6V18z" fill="#ffd22e" />
    <path d="M5 9c1 2 3 3 5 3 3-2 6-2 9-1-1 3-3 5-2 8 2 1 5 1 4 3-1 3-5 3-5 7 2 5 8 6 12 4-4 0-4-4 1-4 3 0 5 2 9 0 4-3 5-8 6-11 4 14-5 27-18 27C10 45 3 34 3 24 3 18 5 14 5 9z" fill="#e5601c" />
    <path d="M6 30c4 12 20 17 32 8-6 12-28 12-32-8z" fill="#c6320f" />
    <path d="M42 20c3 6 2 14-4 19 2-7 2-12 4-19z" fill="#f9a51f" />
  </Ico>,
  <LibreDoc c="#3d8fc4" d="#0c4a7c">
    <path d="M13 20h8M13 24h8M13 28h8M13 32h24M13 36h24M13 40h18" stroke="#0c4a7c" strokeWidth="2" />
    <path d="M23 19h14v10H23z" fill="#8cc4ea" stroke="#0c4a7c" />
    <path d="M24 28.500l4-5 3 3 2-2 3 4z" fill="#333" />
  </LibreDoc>,
  <LibreDoc c="#4fbd35" d="#187a0c">
    <path d="M13 19h21v20H13z" fill="#baf0ae" />
    <path d="M13 19.500h21M13 24h21M13 29h21M13 34h21M13 39h21M13.500 19v20M20 19v20M27 19v20M34 19v20" stroke="#188a0c" strokeWidth="1.200" />
    <path d="M26 29h10v11H26z" fill="#fff" stroke="#666" />
    <path d="M28 39.500v-5M31 39.500v-9M34 39.500v-4" stroke="#e86a20" strokeWidth="2" />
  </LibreDoc>,
  <LibreDoc c="#c4673a" d="#7d2e08">
    <path d="M13 18h23v18H13z" fill="#fff" stroke="#a33e0c" strokeWidth="1.500" />
    <path d="M16 22h17" stroke="#c4561c" strokeWidth="2" />
    <path d="M16 26h2M20 26h4M16 29h2M20 29h4M16 32h2M20 32h4" stroke="#a33e0c" strokeWidth="1.500" />
    <path d="M26 25h7v8h-7z" fill="#e9f6e9" stroke="#555" />
    <path d="M27 31l5-4" stroke="#2a9a2a" strokeWidth="1.500" />
    <path d="M25 37v3l-6 4M25 40l6 4" stroke="#888" strokeWidth="1.500" />
  </LibreDoc>,
  <div className="flex flex-col items-center">
    <svg width="42" height="12" viewBox="0 0 42 12" fill="none">
      <path d="M0 12l4-6h34l4 6z" fill="#c9552c" />
      <path d="M15 12V5l3-3.500h6L27 5v7" stroke="#f08458" strokeWidth="2.500" />
    </svg>
    <div className="flex h-[34px] w-[42px] items-center justify-center bg-gradient-to-b from-[#f0824c] to-[#ee6b3a] font-['Lato',sans-serif] text-[24px] leading-none font-black text-white">A</div>
  </div>,
  <div className="flex h-[41px] w-[41px] flex-col items-center rounded-[3px] bg-gradient-to-b from-white to-[#ececec]">
    <span className="h-[26px] font-['Open_Sans',sans-serif] text-[33px] leading-[26px] font-bold text-[#222]">a</span>
    <svg width="37" height="12" viewBox="0 0 37 12" fill="none">
      <path d="M1 2c10 8 24 8 32 2" stroke="#f79a1c" strokeWidth="2.600" />
      <path d="M29 1.500h7l-1.500 6" stroke="#f79a1c" strokeWidth="1.800" />
    </svg>
  </div>,
  <Ico s={50} vb={50}>
    <circle cx="25" cy="25" r="15" stroke="#dedede" strokeWidth="9" />
    <circle cx="25" cy="25" r="20" stroke="#ececec" strokeWidth="4.500" strokeDasharray="8 7.700" />
    <circle cx="25" cy="25" r="10" stroke="#b4b4b4" />
    <path d="M7 44 32 18" stroke="#a51c1c" strokeWidth="9" strokeLinecap="round" />
    <path d="M7 43 31 18" stroke="#dc4a42" strokeWidth="5" strokeLinecap="round" />
    <path d="M30 20l4-10c2-5 7-7 10-5l-5 5 1 4 4 1 4-5c1 6-3 10-8 10l-6 4z" fill="#e9e9e9" stroke="#777" />
    <circle cx="8.500" cy="42.500" r="1.800" fill="#5e1010" />
  </Ico>,
  <Ico s={50} vb={50}>
    <path d="M2 10h46v36H2z" fill="#cfcfcf" />
    <path d="M2 10h46v2H2z" fill="#fff" />
    <path d="M2 44h46v3H2z" fill="#777" />
    <path d="M6 13h38v30H6z" fill="#2b2b2b" />
    <path d="M6 13h38v8L6 34z" fill="#4c4c4c" />
    <path d="M10 18l6 5-6 5" stroke="#fff" strokeWidth="2.500" />
    <path d="M18 30h9" stroke="#fff" strokeWidth="2.200" />
  </Ico>,
  <Ico s={50} vb={50}>
    <path d="M2 10h46v36H2z" fill="#cfcfcf" />
    <path d="M2 10h46v2H2z" fill="#fff" />
    <path d="M2 44h46v3H2z" fill="#777" />
    <path d="M6 13h38v30H6z" fill="#101f20" />
    <path d="M6 13h38v7L6 24z" fill="#2b4042" />
    <path d="M6 22h38M6 25h38M6 33h38M6 36h38M6 39h38" stroke="#35504f" strokeWidth=".8" />
    <path d="M8 29h6l3-9 4 15 3-9 2 4 3-1h13" stroke="#7ff0cc" strokeWidth="1.600" />
  </Ico>,
];

function Launcher() {
  return (
    <div className="flex h-[1056px] w-[65px] shrink-0 flex-col border-r border-[#b9ada0] bg-gradient-to-b from-[#46372f] via-[#7d6c59] to-[#8d7b68] pt-[6px] pb-[6px]">
      <div className="flex flex-col gap-[7px]">
        {launcher.map((ic, i) => (
          <div key={i} className="flex w-full items-center">
            <svg width="6" height="12" viewBox="0 0 6 12" fill="none" className="shrink-0">
              {i === 9 && <path d="M0 4h5M0 8h5" stroke="#eee" strokeWidth="2.500" />}
              {i === 10 && <path d="M0 2l5 4-5 4z" fill="#eee" />}
            </svg>
            <div
              className={
                "flex h-[52px] w-[52px] shrink-0 items-center justify-center rounded-[4px] border " +
                (i === 0
                  ? "border-[#b5a397] bg-[#a08b7d]"
                  : i === 9
                    ? "border-[#cfc8c4] bg-gradient-to-b from-[#bdb5b2] to-[#a59d99]"
                    : i === 10
                      ? "border-[#a8c0bb] bg-gradient-to-b from-[#c4d8d4] to-[#7fa39c]"
                      : "border-white/20 bg-white/15")
              }
            >
              {ic}
            </div>
            <svg width="6" height="12" viewBox="0 0 6 12" className="shrink-0">
              {i === 10 && <path d="M6 2 1 6l5 4z" fill="#eee" />}
            </svg>
          </div>
        ))}
      </div>
      <div className="mt-auto ml-[6px] flex h-[52px] w-[52px] items-center justify-center rounded-[4px] border border-white/30 bg-white/15">
        <Ico s={50} vb={50}>
          <path d="M8 7h34l-4 38c-5 3-21 3-26 0z" fill="#d8d4ce" fillOpacity=".45" />
          <ellipse cx="25" cy="7.500" rx="17.500" ry="4.500" stroke="#f0f0ee" strokeWidth="2.500" fill="#a39a8e" />
          <path d="M10 20l5-3 4 3 5-3 4 3 5-3 6 4-2 22c-5 4-19 4-24 0z" fill="#eeeeec" />
          <path d="M14 24l5 4-3 5 6 2M26 21l-2 8 6 2M33 22l1 7-4 6M17 38l6 3 7-4 4 3" stroke="#b8b8b4" strokeWidth="1.500" />
        </Ico>
      </div>
    </div>
  );
}

const Heading = ({ w, children, className }: { w: number; children: string; className: string }) => (
  <div className={"flex shrink-0 items-center pl-[15px] font-bold text-[#404040] " + className}>
    <T w={w}>{children}</T>
  </div>
);

function UbuntuSide() {
  return (
    <div className="flex h-[1080px] w-[1920px] shrink-0 flex-col font-['Open_Sans',sans-serif] text-[14px] leading-[20px] text-[#4c4c4c]">
      <div className="flex h-[24px] shrink-0 items-center bg-gradient-to-b from-[#5c5950] to-[#3e3d38] pl-[6px] text-[#dfdbd2]">
        <T w={114} className="font-bold">System Monitor</T>
        <div className="ml-auto flex items-center pr-[8px]">
          <Ico s={18} vb={18}>
            <path d="M5 1 9 6H6.500v9h-3V6H1zM13 17l-4-5h2.500V4h3v8H17z" fill="#dfdbd2" />
          </Ico>
          <div className="ml-[13px] flex h-[20px] w-[20px] items-center justify-center rounded-[2px] bg-[#dfdbd2] text-[13px] text-[#3c3b37]">Pl</div>
          <Ico s={24} vb={24} className="ml-[12px]">
            <path d="M1.500 6.500h20v11h-20z" stroke="#dfdbd2" strokeWidth="1.300" />
            <path d="M3.500 8.500h16v7h-16z" fill="#8a877f" />
            <path d="M22.500 10v4" stroke="#dfdbd2" strokeWidth="2" />
            <path d="M7 9l5 2.500 1-2.500 5 6-5-2-1.500 2z" fill="#fff" />
          </Ico>
          <Ico s={20} vb={20} className="ml-[12px]">
            <path d="M1 7h3l4-4v14l-4-4H1z" fill="#dfdbd2" />
            <path d="M10.500 7c1.500 2 1.500 4 0 6M13 5c2.500 3 2.500 7 0 10" stroke="#dfdbd2" strokeWidth="1.500" />
            <path d="M15.500 3c4 4 4 10 0 14" stroke="#8a877f" strokeWidth="1.500" />
          </Ico>
          <T w={35} className="ml-[13px]">00:43</T>
          <Ico s={17} vb={17} className="ml-[13px]">
            <path d="M6 4.200a5 5 0 1 0 5 0" stroke="#dfdbd2" strokeWidth="2.200" />
            <path d="M8.500.5V8M.8 8.500h3M13.200 8.500h3M3 3l2 2M14 3l-2 2M3 14l2-2M14 14l-2-2M8.500 13v3.500" stroke="#dfdbd2" strokeWidth="2" />
          </Ico>
        </div>
      </div>
      <div className="flex">
        <Launcher />
        <div className="flex h-[1056px] w-[1855px] flex-col bg-[#f6f6f6]">
          <div className="flex h-[27px] shrink-0 items-stretch bg-[#f2f1ef]">
            <div className="flex w-[83px] items-center border-b border-[#c8c6c2] pt-[3px] pl-[8px]"><T w={68}>Processes</T></div>
            <div className="flex w-[89px] items-center rounded-t-[4px] border border-b-0 border-[#c8c6c2] bg-[#f6f6f6] pl-[9px]"><T w={69}>Resources</T></div>
            <div className="flex w-[98px] items-center border-r border-b border-r-[#dcdad7] border-b-[#c8c6c2] pt-[3px] pl-[7px]"><T w={83}>File Systems</T></div>
            <div className="flex-1 border-b border-[#c8c6c2]" />
          </div>
          <div className="flex min-h-0 flex-1 flex-col border-r border-[#c8c6c2]">
            <Heading w={85} className="h-[39px] pt-[7px]">CPU History</Heading>
            <Graph labels={pct} lw={pctW}>
              <path d={smooth(c4)} stroke="#2d7db3" />
              <path d={smooth(c3)} stroke="#49a835" />
              <path d={smooth(c2)} stroke="#cb0c29" />
              <path d={smooth(c1)} stroke="#ff6e00" />
            </Graph>
            <div className="flex h-[30px] shrink-0 items-center pt-px pl-[72px]">
              {legend.map(([n, v, w, c]) => (
                <div key={n} className="flex w-[443.6px] items-center">
                  <div className={"h-[17px] w-[32px] border shadow-[inset_0_0_0_1px_rgba(255,255,255,0.4)] " + c} />
                  <T w={35} className="ml-[7px]">{n}</T>
                  <T w={w} className="ml-[6px]">{v}</T>
                </div>
              ))}
            </div>
            <Heading w={186} className="h-[31px]">Memory and Swap History</Heading>
            <Graph labels={pct} lw={pctW}>
              <path d="M72 192.500h1764.500" stroke="#ab1852" />
              <path d="M72 240.500h1764.500" stroke="#49a835" />
            </Graph>
            <div className="flex h-[53px] shrink-0 pt-[2px] pl-[69px]">
              <div className="flex w-[892px] items-center">
                <Dial fill="#ab1852" slice />
                <div className="ml-[7px] flex flex-col gap-[3px]">
                  <T w={56}>Memory</T>
                  <T w={167}>1,2 GiB (20,4%) of 5,8 GiB</T>
                </div>
              </div>
              <div className="flex items-center">
                <Dial fill="#49a835" />
                <div className="ml-[7px] flex flex-col gap-[3px]">
                  <T w={35}>Swap</T>
                  <T w={161}>0 bytes (0,0%) of 6,0 GiB</T>
                </div>
              </div>
            </div>
            <Heading w={119} className="h-[31px]">Network History</Heading>
            <Graph labels={kib} lw={[33, 33, 33, 33, 33, 33]}>
              <path d={smooth(net(5.8), 1)} stroke="#f01c05" />
              <path d={smooth(net(17.6), 1)} stroke="#2d7db3" />
            </Graph>
            <div className="flex h-[64px] shrink-0 pt-[7px] pl-[77px] leading-[20px]">
              <div className="flex w-[849px]">
                <div className="pt-[5px]"><BigArrow /></div>
                <div className="ml-[14px] flex flex-col gap-[5px]">
                  <T w={63}>Receiving</T>
                  <T w={96}>Total Received</T>
                </div>
                <div className="ml-auto flex flex-col items-end gap-[5px]">
                  <T w={61}>0 bytes/s</T>
                  <T w={65}>120,7 MiB</T>
                </div>
              </div>
              <div className="ml-[58px] flex w-[818px]">
                <div className="pt-[5px]"><BigArrow up /></div>
                <div className="ml-[14px] flex flex-col gap-[5px]">
                  <T w={30}>Sent</T>
                  <T w={67}>Total Sent</T>
                </div>
                <div className="ml-auto flex flex-col items-end gap-[5px]">
                  <T w={61}>0 bytes/s</T>
                  <T w={61}>936,1 KiB</T>
                </div>
              </div>
            </div>
            <div className="flex h-px shrink-0">
              <div className="w-[652px] bg-[#c8c6c2]" />
              <div className="w-[486px] bg-white" />
              <div className="flex-1 bg-[#c8c6c2]" />
            </div>
          </div>
        </div>
      </div>
    </div>
  );
}

export default function App() {
  return (
    <div className="flex h-[1080px] w-[3840px] overflow-hidden">
      <WindowsSide />
      <UbuntuSide />
    </div>
  );
}
